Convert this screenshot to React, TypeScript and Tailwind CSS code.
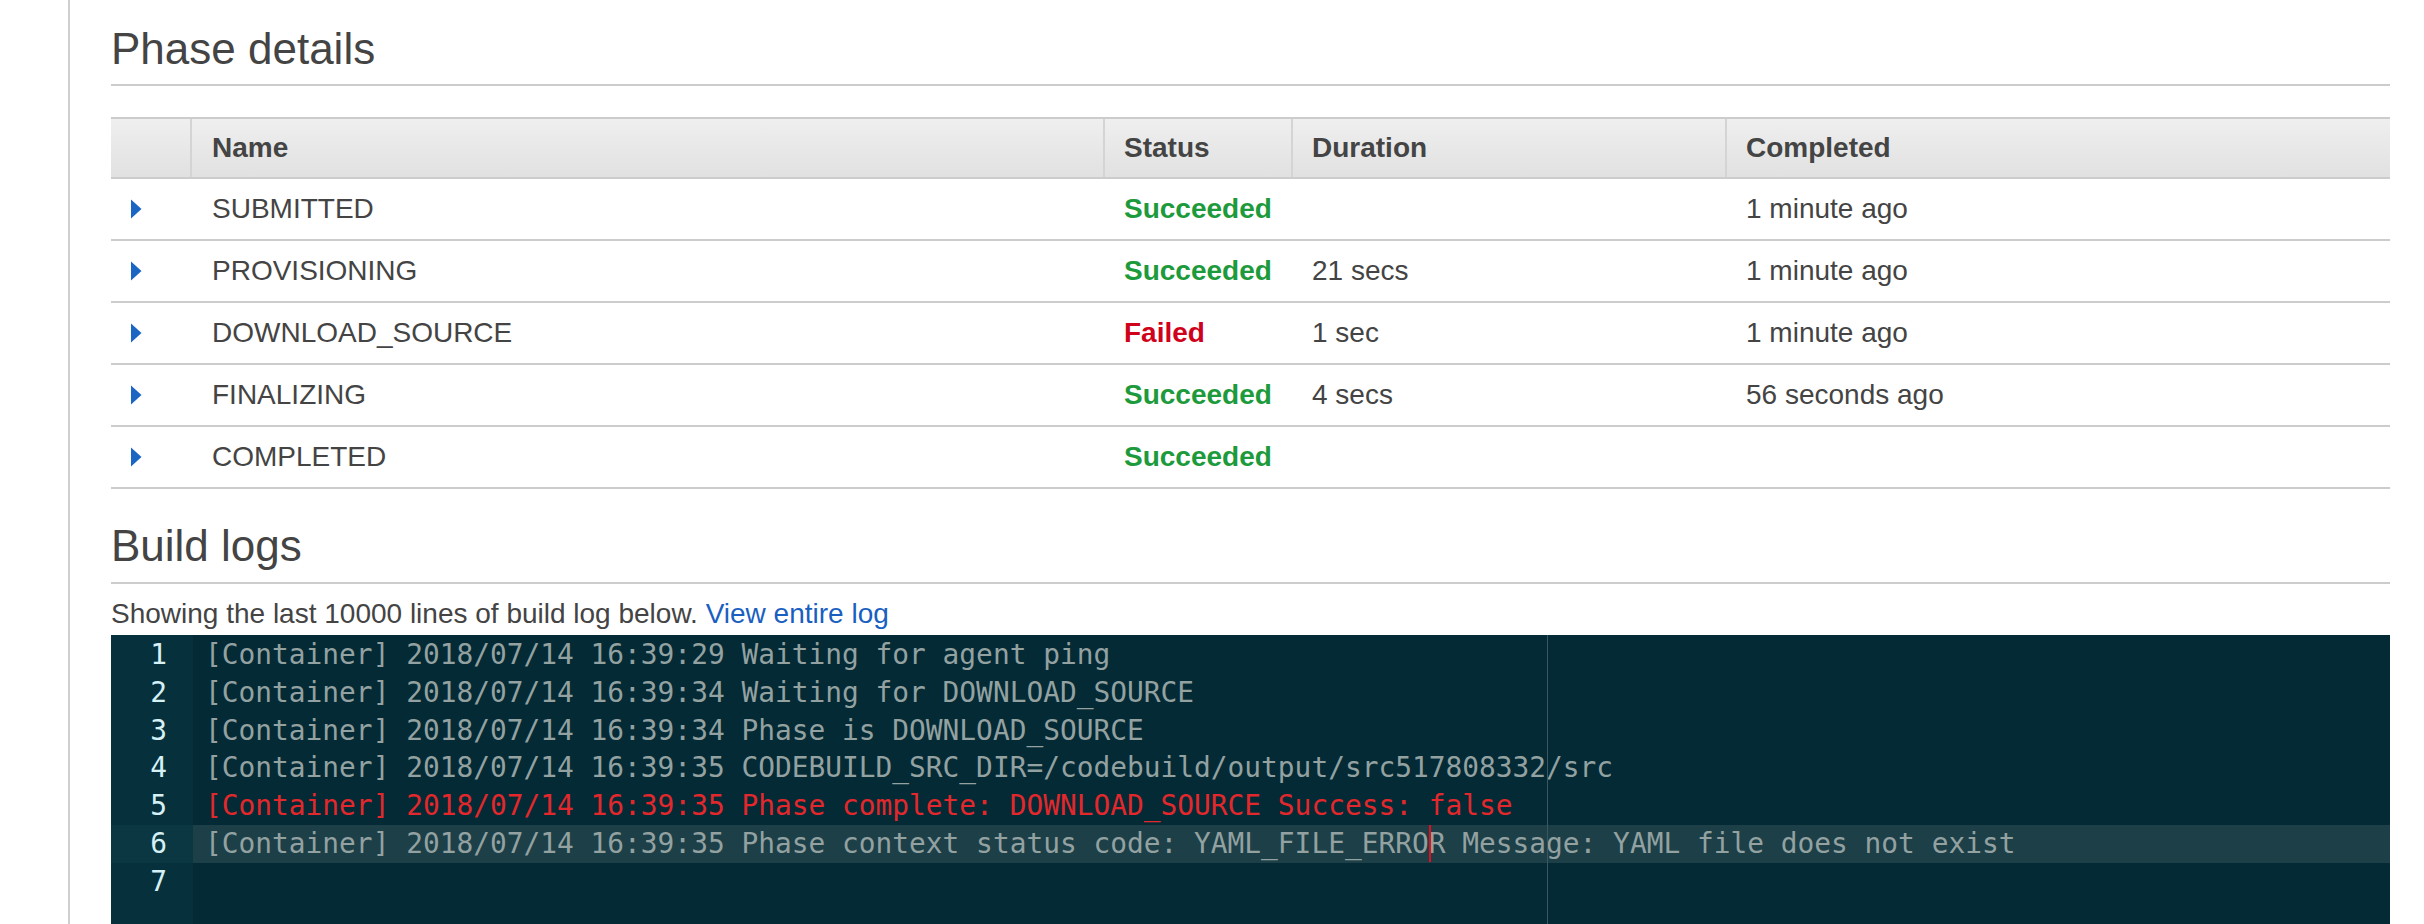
const phases = [
  { name: "SUBMITTED", status: "Succeeded", duration: "", completed: "1 minute ago" },
  { name: "PROVISIONING", status: "Succeeded", duration: "21 secs", completed: "1 minute ago" },
  { name: "DOWNLOAD_SOURCE", status: "Failed", duration: "1 sec", completed: "1 minute ago" },
  { name: "FINALIZING", status: "Succeeded", duration: "4 secs", completed: "56 seconds ago" },
  { name: "COMPLETED", status: "Succeeded", duration: "", completed: "" },
];

const logLines = [
  { text: "[Container] 2018/07/14 16:39:29 Waiting for agent ping" },
  { text: "[Container] 2018/07/14 16:39:34 Waiting for DOWNLOAD_SOURCE" },
  { text: "[Container] 2018/07/14 16:39:34 Phase is DOWNLOAD_SOURCE" },
  { text: "[Container] 2018/07/14 16:39:35 CODEBUILD_SRC_DIR=/codebuild/output/src517808332/src" },
  { text: "[Container] 2018/07/14 16:39:35 Phase complete: DOWNLOAD_SOURCE Success: false", error: true },
  {
    text: "[Container] 2018/07/14 16:39:35 Phase context status code: YAML_FILE_ERROR Message: YAML file does not exist",
    active: true,
  },
  { text: "" },
];

function ExpandArrow() {
  return (
    <svg viewBox="0 0 12 20" className="h-[20px] w-[12px]" aria-hidden="true">
      <path d="M1 0.5 L11.5 10 L1 19.5 Z" fill="#1a66c2" />
    </svg>
  );
}

export default function App() {
  return (
    <div
      className="flex h-[924px] overflow-hidden bg-white text-[#444]"
      style={{ fontFamily: '"Liberation Sans", Arial, sans-serif' }}
    >
      <div className="w-[68px] shrink-0" />
      <div className="flex min-w-0 flex-1 flex-col border-l-2 border-[#cfcfcf] pl-[41px] pr-[34px]">
        {/* Phase details */}
        <h2 className="mt-[27px] border-b-2 border-[#cccccc] pb-[13px] text-[44px] leading-[44px] font-normal">
          Phase details
        </h2>

        <div className="mt-[31px] border-t-2 border-[#cccccc] text-[28px]">
          <div className="grid h-[60px] grid-cols-[79px_913px_188px_434px_1fr] border-b-2 border-[#cccccc] bg-gradient-to-b from-[#efefef] to-[#e1e1e1] font-bold">
            <div />
            <div className="flex items-center border-l-2 border-[#d4d4d4] pl-[20px]">Name</div>
            <div className="flex items-center border-l-2 border-[#d4d4d4] pl-[19px]">Status</div>
            <div className="flex items-center border-l-2 border-[#d4d4d4] pl-[19px]">Duration</div>
            <div className="flex items-center border-l-2 border-[#d4d4d4] pl-[19px]">Completed</div>
          </div>
          {phases.map((p) => (
            <div
              key={p.name}
              className="grid h-[62px] grid-cols-[79px_913px_188px_434px_1fr] border-b-2 border-[#cccccc]"
            >
              <div className="flex items-center pl-[19px]">
                <ExpandArrow />
              </div>
              <div className="flex items-center pl-[22px]">{p.name}</div>
              <div
                className={
                  p.status === "Failed"
                    ? "flex items-center pl-[21px] font-bold text-[#d0021b]"
                    : "flex items-center pl-[21px] font-bold text-[#1d9a3c]"
                }
              >
                {p.status}
              </div>
              <div className="flex items-center pl-[21px]">{p.duration}</div>
              <div className="flex items-center pl-[21px]">{p.completed}</div>
            </div>
          ))}
        </div>

        {/* Build logs */}
        <h2 className="mt-[35px] border-b-2 border-[#cccccc] pb-[14px] text-[44px] leading-[44px] font-normal">
          Build logs
        </h2>
        <p className="mt-[16px] text-[28px] leading-[28px]">
          Showing the last 10000 lines of build log below.{" "}
          <a href="#" className="text-[#1a5fc0]">
            View entire log
          </a>
        </p>

        <div
          className="relative mt-[7px] flex-1 bg-[#032a35] pt-[1px] text-[27.85px] leading-[37.8px]"
          style={{ fontFamily: '"DejaVu Sans Mono", "Liberation Mono", monospace' }}
        >
          <div className="absolute top-0 bottom-0 left-0 w-[82px] bg-[#06303b]" />
          {logLines.map((line, i) => (
            <div key={i} className="relative flex h-[37.8px]">
              <div
                className={
                  line.active
                    ? "w-[82px] shrink-0 bg-[#0b3742] pr-[26px] text-right text-[#d6f1f5]"
                    : "w-[82px] shrink-0 pr-[26px] text-right text-[#d6f1f5]"
                }
              >
                {i + 1}
              </div>
              <div
                className={
                  line.active
                    ? "flex-1 whitespace-pre bg-[#1c3f48] pl-[12px] text-[#93a1a1]"
                    : line.error
                    ? "flex-1 whitespace-pre pl-[12px] text-[#e2282c]"
                    : "flex-1 whitespace-pre pl-[12px] text-[#93a1a1]"
                }
              >
                {line.text}
              </div>
            </div>
          ))}
          {/* print margin */}
          <div className="absolute top-0 bottom-0 left-[1436px] w-px bg-[#3b5860]" />
          {/* cursor */}
          <div className="absolute top-[190px] left-[1318px] h-[37px] w-[2px] bg-[#e0101e]" />
        </div>
      </div>
    </div>
  );
}
